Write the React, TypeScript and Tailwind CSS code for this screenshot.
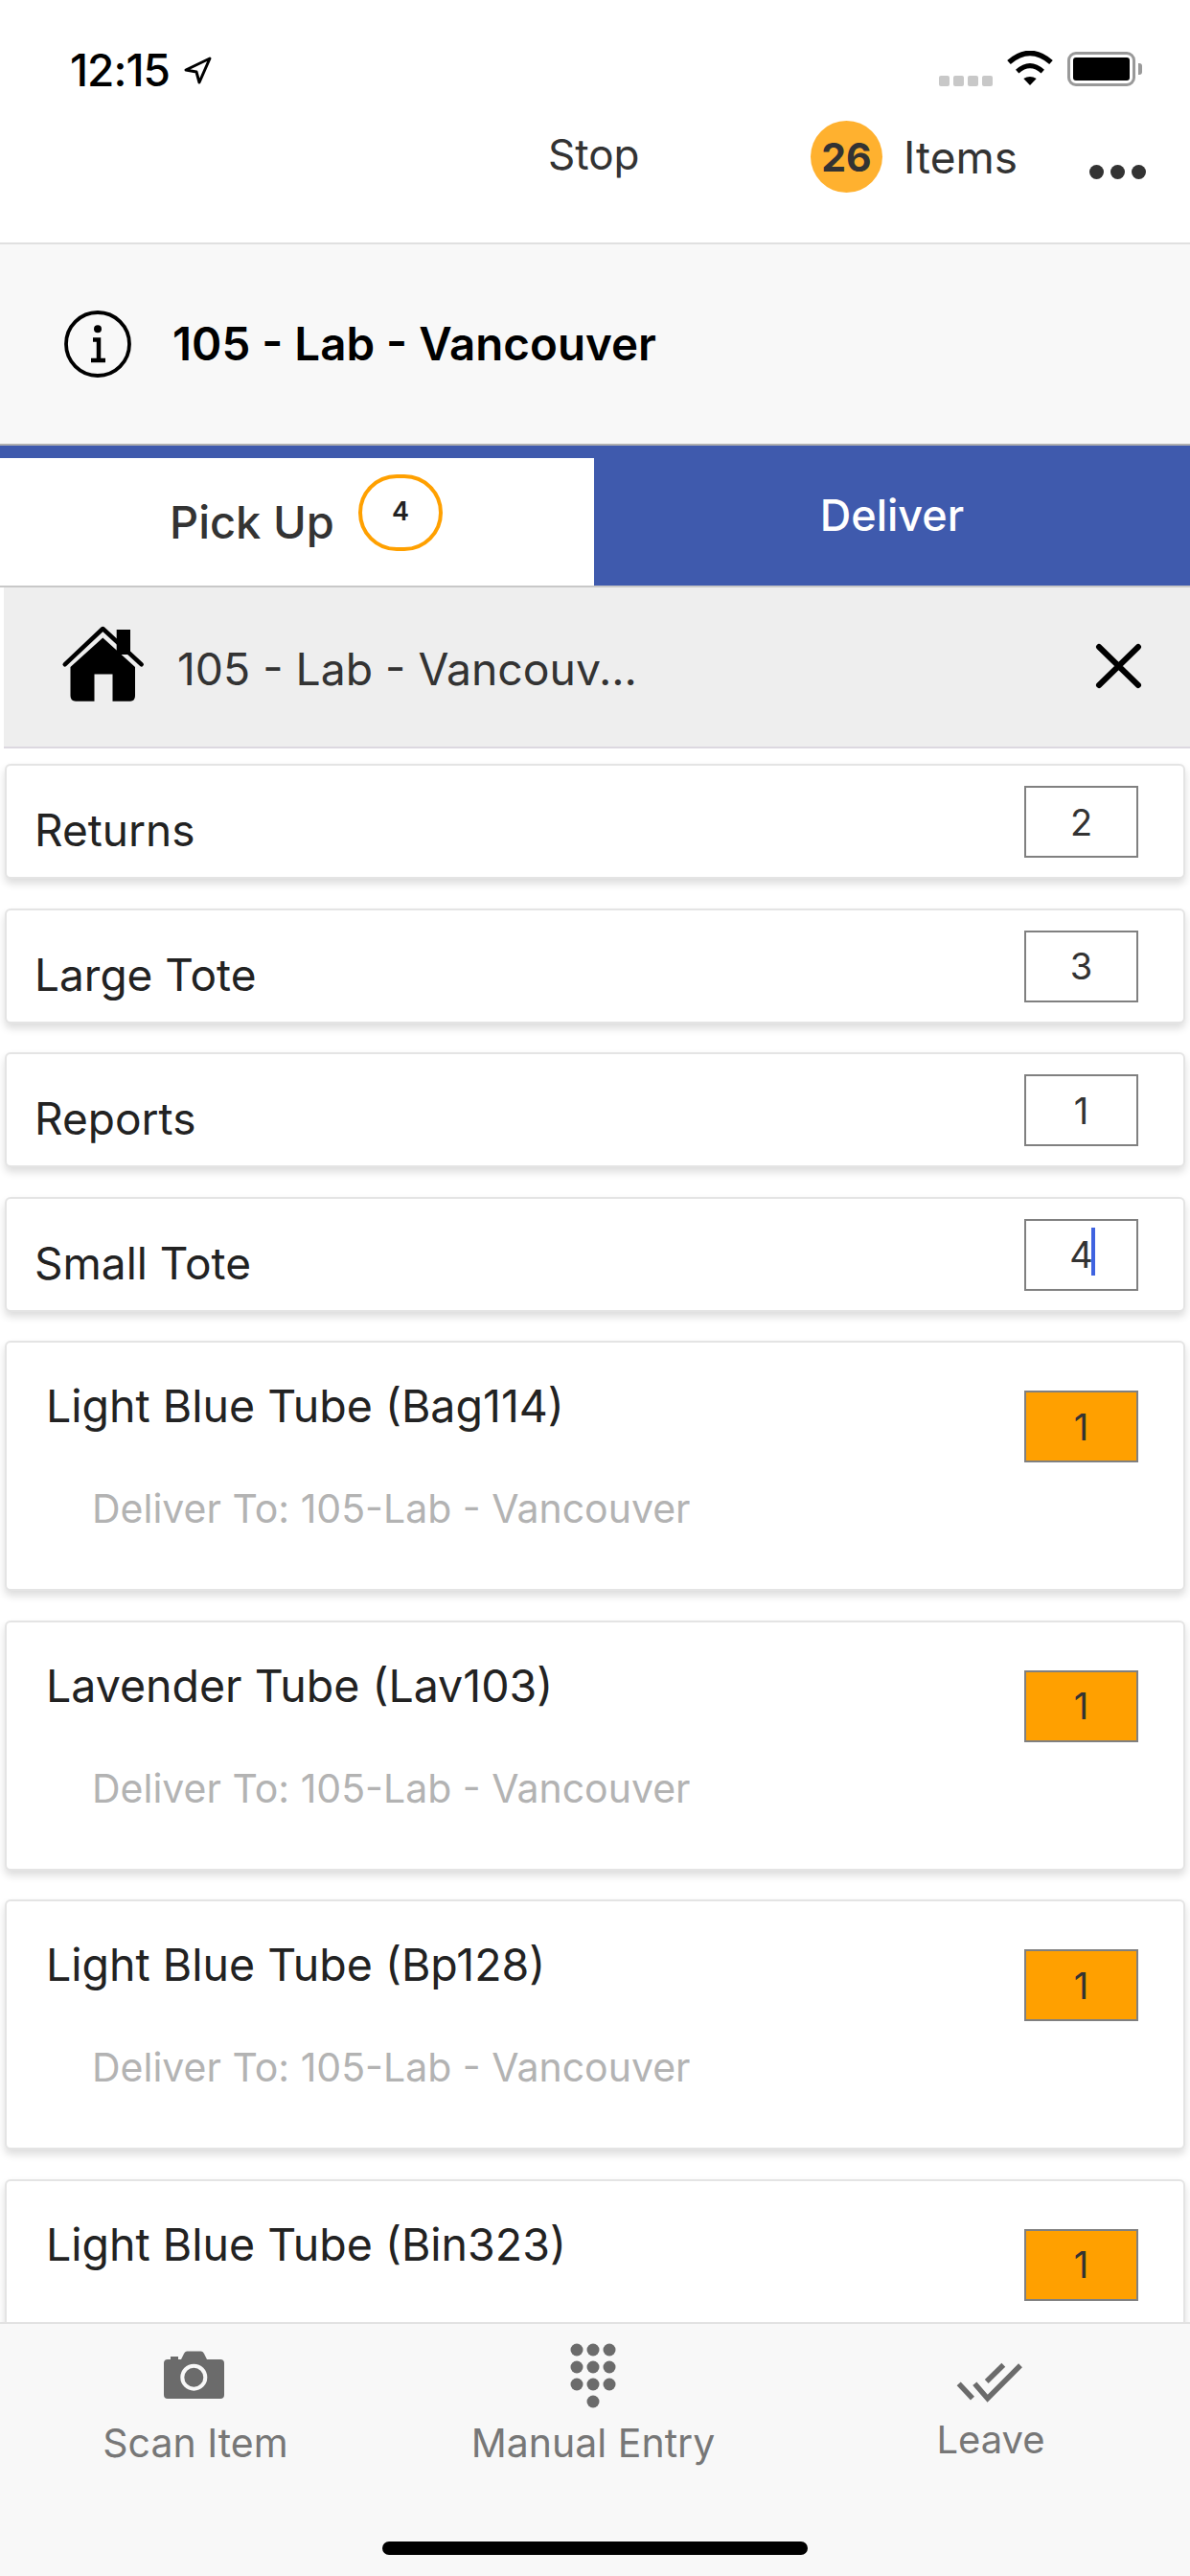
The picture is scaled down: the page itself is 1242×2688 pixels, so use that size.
import { ReactNode } from "react";

const rows = [
  { label: "Returns", value: "2" },
  { label: "Large Tote", value: "3" },
  { label: "Reports", value: "1" },
  { label: "Small Tote", value: "4", focused: true },
];

// last card runs under the footer, its second line is never seen
const tubes = [
  { title: "Light Blue Tube (Bag114)", to: "Deliver To: 105-Lab - Vancouver" },
  { title: "Lavender Tube (Lav103)", to: "Deliver To: 105-Lab - Vancouver" },
  { title: "Light Blue Tube (Bp128)", to: "Deliver To: 105-Lab - Vancouver" },
  { title: "Light Blue Tube (Bin323)" },
];

function QtyBox({ orange, children }: { orange?: boolean; children: ReactNode }) {
  return (
    <div
      className={`w-[119px] h-[75px] shrink-0 flex items-center justify-center border-2 border-[#808080] text-[38px] leading-none text-[#333] ${
        orange ? "bg-[#ffa000]" : "bg-white"
      }`}
    >
      {children}
    </div>
  );
}

function CountRow({ label, value, focused }: { label: string; value: string; focused?: boolean }) {
  return (
    <div className="h-[120px] shrink-0 rounded-[6px] border-2 border-[#e4e4e4] bg-white shadow-[0_5px_8px_rgba(0,0,0,0.14)] flex justify-between pl-[29px] pr-[47px] pt-[21px]">
      <span className="text-[46px] leading-[53px] text-[#222] pt-[20px]">{label}</span>
      <QtyBox>
        <span className="relative">
          {value}
          {focused && <span className="absolute left-[23px] top-[-9px] w-[4px] h-[50px] bg-[#3f63e0]" />}
        </span>
      </QtyBox>
    </div>
  );
}

function TubeCard({ title, to }: { title: string; to?: string }) {
  return (
    <div className="h-[261px] shrink-0 rounded-[6px] border-2 border-[#e4e4e4] bg-white shadow-[0_5px_8px_rgba(0,0,0,0.14)] flex justify-between pl-[41px] pr-[47px] pt-[50px]">
      <div>
        <div className="text-[46.5px] leading-[53px] text-[#222] -mt-[10px]">{title}</div>
        {to && <div className="text-[41px] leading-[48px] text-[#b3b3b3] pl-[48px] mt-[56px]">{to}</div>}
      </div>
      <QtyBox orange>1</QtyBox>
    </div>
  );
}

function HomeIcon() {
  return (
    <svg viewBox="0 0 105 95" className="w-[105px] h-[95px] shrink-0 mb-[7px]" fill="#000">
      <path d="M66.700 12H81v26H66.700z" />
      <path d="M12.700 48.300 52.300 11l40.400 37.300" fill="none" stroke="#000" strokeWidth="4.500" strokeLinecap="round" strokeLinejoin="round" />
      <path d="M18.500 51 52.300 20.500 86 51v30q0 5.700-5 5.700H62.500V58.500h-19v28.200H24q-5.500 0-5.500-5.700z" />
    </svg>
  );
}

function InfoIcon() {
  return (
    <svg viewBox="0 0 70 70" className="w-[70px] h-[70px] shrink-0" fill="none" stroke="#000">
      <circle cx="35" cy="35" r="33" strokeWidth="3.800" />
      <circle cx="35" cy="19.300" r="4" fill="#000" stroke="none" />
      <path d="M30 30.500h6V51M28 52h15" strokeWidth="4.500" />
    </svg>
  );
}

function CameraIcon() {
  return (
    <svg viewBox="0 0 90 70" className="w-[90px] h-[70px]">
      <path
        fillRule="evenodd"
        fill="#6b6b6b"
        d="M16 22h3v-3h8v3h3l3-6q1-2.500 3-2.500h15q2 0 3 2.500l3 6h14q4 0 4 4v33q0 4-4 4H16q-4 0-4-4V26q0-4 4-4ZM43.300 26.700a14 14 0 1 0 0 28 14 14 0 0 0 0-28Zm0 4a10 10 0 1 1 0 20 10 10 0 0 1 0-20Z"
      />
    </svg>
  );
}

function KeypadIcon() {
  const cols = [8, 25, 42];
  const ys = [7, 25, 43];
  return (
    <svg viewBox="0 0 50 68" className="w-[50px] h-[68px]" fill="#6b6b6b">
      {ys.map((y) => cols.map((x) => <circle key={`${x}-${y}`} cx={x} cy={y} r="6.500" />))}
      <circle cx="25" cy="61" r="6.500" />
    </svg>
  );
}

function LeaveIcon() {
  return (
    <svg viewBox="0 0 90 60" className="w-[90px] h-[60px]" fill="none" stroke="#6b6b6b" strokeWidth="5.500">
      <path d="M11.700 32.300 26 47.700" />
      <path d="M28.300 32.300 41.700 47.700 76 13.300" />
      <path d="M40.700 30 58.300 12.700" />
    </svg>
  );
}

function StatusBar() {
  return (
    <div className="flex justify-between items-start pl-[73px] pr-[50px] pt-[47px]">
      <div className="flex items-center gap-[14px]">
        <span className="text-[46px] leading-[52px] font-medium text-black tracking-[-1px]">12:15</span>
        <svg viewBox="0 0 30 30" className="w-[30px] h-[30px]" fill="none" stroke="#000" strokeWidth="3">
          <path d="M28 3 3 15l11 2 3 11z" strokeLinejoin="round" />
        </svg>
      </div>
      <div className="flex items-end gap-[15px] pt-[6px]">
        <div className="flex gap-[4px]">
          {[0, 1, 2, 3].map((i) => (
            <span key={i} className="w-[11px] h-[11px] rounded-[2px] bg-[#c8c8c8]" />
          ))}
        </div>
        <svg viewBox="0 0 48 37" className="w-[48px] h-[37px]" fill="none" stroke="#000" strokeWidth="5.500">
          <path d="M2 12Q24-7 46 12" />
          <path d="M10.700 21.700Q24 9.700 37.300 21.700" strokeWidth="5" />
          <path d="M24 36 17.300 29Q24 25 30.700 29z" fill="#000" stroke="none" />
        </svg>
        <div className="flex items-center">
          <div className="w-[71px] h-[36px] rounded-[9px] border-[3px] border-[#999] p-[3px]">
            <div className="w-full h-full rounded-[3px] bg-black" />
          </div>
          <span className="w-[4px] h-[12px] ml-[3px] rounded-r-[3px] bg-[#9a9a9a]" />
        </div>
      </div>
    </div>
  );
}

export default function App() {
  return (
    <div className="w-[1242px] h-[2688px] bg-white flex flex-col overflow-hidden font-[Inter,sans-serif]">
      <div className="h-[255px] shrink-0 border-b-2 border-[#e0e0e0] bg-white">
        <StatusBar />
        <div className="flex items-center text-[#333] text-[44px] leading-[50px] mt-[27px] pl-[572px]">
          <span className="w-[274px] -mt-[5px]">Stop</span>
          <span className="w-[75px] h-[75px] shrink-0 rounded-full bg-[#ffb12f] flex items-center justify-center text-[41px] font-bold text-[#333]">26</span>
          <span className="w-[216px] pl-[22px] text-[46px]">Items</span>
          <div className="flex gap-[7px] mt-[31px]">
            <span className="w-[15px] h-[15px] rounded-full bg-[#333]" />
            <span className="w-[15px] h-[15px] rounded-full bg-[#333]" />
            <span className="w-[15px] h-[15px] rounded-full bg-[#333]" />
          </div>
        </div>
      </div>

      <div className="h-[208px] shrink-0 bg-[#f8f8f8] flex items-center pl-[67px] gap-[43px]">
        <InfoIcon />
        <span className="text-[47.5px] leading-[54px] font-semibold text-black">105 - Lab - Vancouver</span>
      </div>

      <div className="h-[150px] shrink-0 bg-[#3f5aad] border-t-2 border-b-2 border-t-[#b0b0b0] border-b-[#c8c8c8] pt-[13px] flex">
        <div className="w-[620px] bg-white flex items-center pl-[177px]">
          <span className="w-[197px] text-[47px] leading-[54px] font-medium text-[#333]">Pick Up</span>
          <span className="w-[88px] h-[80px] rounded-full border-[4px] border-[#ffa000] flex items-center justify-center text-[27px] font-semibold text-[#222] -mt-[20px]">4</span>
        </div>
        <div className="flex-1 flex items-center justify-center text-white text-[45px] leading-[54px] font-medium -mt-[13px]">Deliver</div>
      </div>

      <div className="h-[168px] shrink-0 ml-[4px] bg-[#eeeeee] border-b-2 border-[#dcd8e0] flex items-center pl-[51px] pr-[50px]">
        <HomeIcon />
        <span className="flex-1 ml-[25px] text-[46.3px] leading-[53px] text-[#333] mt-[5px]">105 - Lab - Vancouv...</span>
        <svg viewBox="0 0 49 48" className="w-[49px] h-[48px] -mt-[2px]" fill="none" stroke="#000" strokeWidth="6" strokeLinecap="round">
          <path d="M4 4 45 44M45 4 4 44" />
        </svg>
      </div>

      <div className="flex-1 min-h-0 overflow-hidden flex flex-col gap-[30.5px] pt-[16px] px-[5px]">
        {rows.map((r) => (
          <CountRow key={r.label} {...r} />
        ))}
        {tubes.map((t) => (
          <TubeCard key={t.title} {...t} />
        ))}
      </div>

      <div className="h-[265px] shrink-0 border-t-2 border-[#e2e2e2] bg-[#f8f8f8] flex flex-col">
        <div className="grid grid-cols-3 text-[#777] text-[41px] leading-[48px]">
          <div className="flex flex-col items-center pt-[15px] pr-[6px]">
            <CameraIcon />
            <span className="mt-[15px]">Scan Item</span>
          </div>
          <div className="flex flex-col items-center pt-[20px] pr-[4px]">
            <KeypadIcon />
            <span className="mt-[12px]">Manual Entry</span>
          </div>
          <div className="flex flex-col items-center pt-[30px] pr-[2px]">
            <LeaveIcon />
            <span className="mt-[7px] text-[40px]">Leave</span>
          </div>
        </div>
        <div className="mt-auto mb-[22px] mx-auto w-[444px] h-[14px] rounded-full bg-black" />
      </div>
    </div>
  );
}
